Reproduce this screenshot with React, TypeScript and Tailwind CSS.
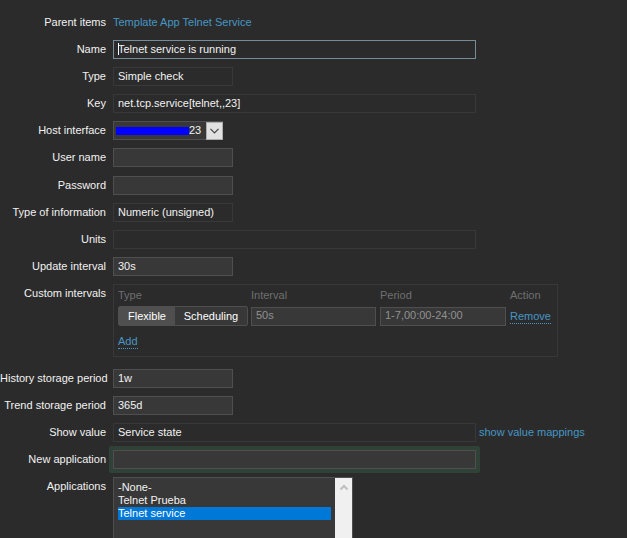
import { useState, ReactNode } from 'react';

interface RowProps {
  label: string;
  htmlFor?: string;
  children: ReactNode;
  grow?: boolean;
}

const LINK = 'text-[#4796c4] hover:text-[#7ab8dc]';
const DOTTED_LINK = 'text-[#4796c4] border-b border-dotted border-[#4796c4] leading-[14px]';
const READONLY = 'h-[19px] px-1 pb-0.5 max-w-full bg-[#2b2b2b] border border-[#383838] outline-none';
const EDITABLE = 'h-[19px] px-1 pb-0.5 max-w-full bg-[#383838] border border-[#4f4f4f] outline-none';

function Row({ label, htmlFor, children, grow }: RowProps) {
  return (
    <div className={grow ? 'flex gap-[7px] flex-1' : 'flex gap-[7px]'}>
      <label htmlFor={htmlFor} className="w-[106px] shrink-0 text-right leading-[18px] whitespace-nowrap">
        {label}
      </label>
      <div className="flex-1 min-w-0 flex items-start">{children}</div>
    </div>
  );
}

function HostInterface() {
  return (
    <div className="relative w-[110px] h-[19px]">
      <select
        id="interface"
        className="appearance-none w-full h-full pl-[75px] bg-[#383838] border border-[#4f4f4f] outline-none"
      >
        <option>23</option>
      </select>
      <span className="absolute left-[3px] top-[6px] w-[73px] h-2 bg-[#0000ff]" />
      <span className="absolute right-0 top-px w-[17px] h-[18px] bg-[#e1e1e1] border border-[#adadad] flex items-center justify-center pointer-events-none">
        <svg width="9" height="6" viewBox="0 0 9 6" fill="none" stroke="#444" strokeWidth="1.2">
          <path d="M0.5 0.8L4.5 4.8L8.5 0.8" />
        </svg>
      </span>
    </div>
  );
}

function CustomIntervals() {
  const [type, setType] = useState('flexible');
  const segment = 'h-full text-white text-center';

  return (
    <div className="w-[445px] max-w-full border border-[#383838] pl-1">
      <table className="w-full table-fixed border-collapse text-left">
        <colgroup>
          <col className="w-[133px]" />
          <col className="w-[129px]" />
          <col className="w-[130px]" />
          <col />
        </colgroup>
        <thead>
          <tr className="h-[21px] text-[#6f6f6f]">
            <th className="p-0 font-normal">Type</th>
            <th className="p-0 font-normal">Interval</th>
            <th className="p-0 font-normal">Period</th>
            <th className="p-0 font-normal">Action</th>
          </tr>
        </thead>
        <tbody>
          <tr className="h-5">
            <td className="p-0">
              <div className="flex w-[130px] h-5 border border-[#4f4f4f] rounded-xs">
                <button
                  type="button"
                  onClick={() => setType('flexible')}
                  className={`${segment} w-14 ${type === 'flexible' ? 'bg-[#4f4f4f]' : 'bg-[#383838]'}`}
                >
                  Flexible
                </button>
                <button
                  type="button"
                  onClick={() => setType('scheduling')}
                  className={`${segment} flex-1 ${type === 'scheduling' ? 'bg-[#4f4f4f]' : 'bg-[#383838]'}`}
                >
                  Scheduling
                </button>
              </div>
            </td>
            <td className="p-0">
              <input aria-label="Interval" placeholder="50s" className={`${EDITABLE} block w-[125px] placeholder:text-[#919191]`} />
            </td>
            <td className="p-0">
              <input aria-label="Period" placeholder="1-7,00:00-24:00" className={`${EDITABLE} block w-[126px] placeholder:text-[#919191]`} />
            </td>
            <td className="p-0">
              <button type="button" className={DOTTED_LINK}>Remove</button>
            </td>
          </tr>
          <tr className="h-[30px]">
            <td className="p-0" colSpan={4}>
              <button type="button" className={DOTTED_LINK}>Add</button>
            </td>
          </tr>
        </tbody>
      </table>
    </div>
  );
}

function Applications() {
  const option = 'h-[13px] min-h-0 p-0 leading-[13px] text-[#f2f2f2] checked:text-white checked:bg-[linear-gradient(#0078d7,#0078d7)]';

  return (
    <div className="flex self-stretch w-[240px] max-w-full bg-[#383838] border border-b-0 border-[#4f4f4f]">
      <select
        id="applications"
        multiple
        size={4}
        defaultValue={['service']}
        className="flex-1 min-w-0 px-1 pt-[3px] bg-[#383838] border-0 rounded-none outline-none overflow-hidden"
      >
        <option value="none" className={option}>-None-</option>
        <option value="prueba" className={option}>Telnet Prueba</option>
        <option value="service" className={option}>Telnet service</option>
      </select>
      <div className="w-[17px] bg-[#f0f0f0] flex justify-center pt-[6px]">
        <svg width="8" height="7" viewBox="0 0 8 7" fill="none" stroke="#bfbfbf" strokeWidth="2">
          <path d="M0.5 5.5L4 2L7.5 5.5" />
        </svg>
      </div>
    </div>
  );
}

export default function App() {
  return (
    <form className="min-h-screen flex flex-col pt-[13px] bg-[#2b2b2b] text-[#f2f2f2] text-[11px] font-['Liberation_Sans',Arial,sans-serif]">
      <div className="flex flex-col gap-2">
        <Row label="Parent items">
          <a href="#template" className={`${LINK} h-[19px] leading-[18px]`}>Template App Telnet Service</a>
        </Row>
        <Row label="Name" htmlFor="name">
          <div className="relative w-[363px] max-w-full">
            <input
              id="name"
              readOnly
              value="Telnet service is running"
              className="block w-full h-[19px] px-1 pb-0.5 bg-[#2b2b2b] border border-[#768d99] outline-none"
            />
            {/* text caret */}
            <span className="absolute left-[5px] top-[3px] w-px h-3 bg-white" />
          </div>
        </Row>
        <Row label="Type" htmlFor="type">
          <input id="type" readOnly value="Simple check" className={`${READONLY} w-[120px]`} />
        </Row>
        <Row label="Key" htmlFor="key">
          <input id="key" readOnly value="net.tcp.service[telnet,,23]" className={`${READONLY} w-[363px]`} />
        </Row>
        <Row label="Host interface" htmlFor="interface">
          <HostInterface />
        </Row>
        <Row label="User name" htmlFor="username">
          <input id="username" className={`${EDITABLE} w-[120px]`} />
        </Row>
      </div>

      <div className="flex flex-col gap-2 mt-[9px]">
        <Row label="Password" htmlFor="password">
          <input id="password" type="password" className={`${EDITABLE} w-[120px]`} />
        </Row>
        <Row label="Type of information" htmlFor="value-type">
          <input id="value-type" readOnly value="Numeric (unsigned)" className={`${READONLY} w-[120px]`} />
        </Row>
        <Row label="Units" htmlFor="units">
          <input id="units" readOnly className={`${READONLY} w-[363px]`} />
        </Row>
        <Row label="Update interval" htmlFor="delay">
          <input id="delay" defaultValue="30s" className={`${EDITABLE} w-[120px]`} />
        </Row>
        <Row label="Custom intervals">
          <CustomIntervals />
        </Row>
      </div>

      <div className="flex flex-col flex-1 gap-2 mt-3">
        <Row label="History storage period" htmlFor="history">
          <input id="history" defaultValue="1w" className={`${EDITABLE} w-[120px]`} />
        </Row>
        <Row label="Trend storage period" htmlFor="trends">
          <input id="trends" defaultValue="365d" className={`${EDITABLE} w-[120px]`} />
        </Row>
        <Row label="Show value" htmlFor="valuemap">
          <div className="flex gap-[3px] max-w-full">
            <input id="valuemap" readOnly value="Service state" className={`${READONLY} w-[363px] min-w-0`} />
            <a href="#mappings" className={`${LINK} leading-[18px] whitespace-nowrap`}>show value mappings</a>
          </div>
        </Row>
        <Row label="New application" htmlFor="new-application">
          <div className="-m-1 p-1 w-[371px] max-w-full rounded-xs bg-[#304237]">
            <input id="new-application" className={`${EDITABLE} block w-full`} />
          </div>
        </Row>
        <Row label="Applications" htmlFor="applications" grow>
          <Applications />
        </Row>
      </div>
    </form>
  );
}
